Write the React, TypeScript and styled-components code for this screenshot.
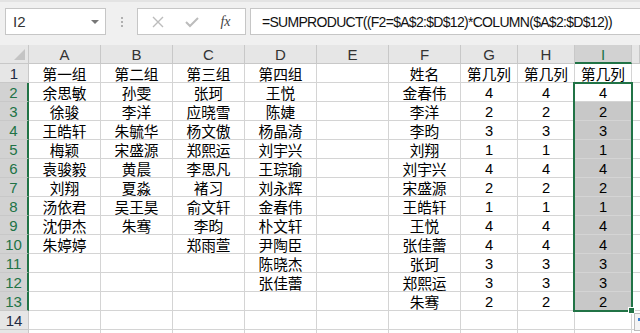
import { FC } from "react";
import styled, { createGlobalStyle } from "styled-components";

const GlobalStyle = createGlobalStyle`
  body {
    margin: 0;
    background: #ffffff;
    overflow: hidden;
    font-family: "Liberation Sans", "Noto Sans CJK SC", sans-serif;
  }
`;

const GREEN = "#217346";

const Page = styled.div`
  width: 640px;
  height: 333px;
  overflow: hidden;
`;

const Toolbar = styled.div`
  height: 45px;
  box-sizing: border-box;
  background: #f0f0f0;
  border-top: 2px solid #e3e3e3;
  padding: 6px 0 0 5px;
  display: flex;
  align-items: flex-start;
`;

const NameBox = styled.div`
  width: 101px;
  height: 27px;
  box-sizing: border-box;
  background: #fff;
  border: 1px solid #c6c6c6;
  display: flex;
  align-items: center;
  justify-content: space-between;
  padding: 0 6px 0 7px;
  font-size: 15px;
  color: #333;
`;

const DropArrow = styled.span`
  width: 0;
  height: 0;
  border-left: 4px solid transparent;
  border-right: 4px solid transparent;
  border-top: 4px solid #777;
`;

const Grip = styled.div`
  width: 31px;
  height: 27px;
  display: flex;
  flex-direction: column;
  align-items: center;
  justify-content: center;
  gap: 2px;
  span {
    width: 2px;
    height: 2px;
    background: #b0b0b0;
  }
`;

const FxBox = styled.div`
  width: 109px;
  height: 27px;
  box-sizing: border-box;
  background: #fff;
  border: 1px solid #c6c6c6;
  display: flex;
  align-items: center;
  justify-content: space-around;
  padding: 0 4px;
`;

const FxText = styled.span`
  font-family: "Liberation Serif", serif;
  font-style: italic;
  font-size: 14px;
  color: #444;
`;

const FormulaInput = styled.div`
  flex: 1;
  margin-left: 4px;
  margin-right: -2px;
  height: 27px;
  box-sizing: border-box;
  background: #fff;
  border: 1px solid #c6c6c6;
  padding-left: 11px;
  display: flex;
  align-items: center;
  font-size: 14px;
  letter-spacing: -0.7px;
  color: #111;
  white-space: nowrap;
`;

const Sheet = styled.div`
  position: relative;
  display: grid;
  grid-template-columns: 29px repeat(6, 72px) repeat(3, 57px) 1fr;
  grid-auto-rows: 19px;
`;

const Corner = styled.div`
  background: #e6e6e6;
  border-right: 1px solid #c8c8c8;
  border-bottom: 1px solid #c8c8c8;
  box-sizing: border-box;
  display: flex;
  align-items: flex-end;
  justify-content: flex-end;
  padding: 0 3px 3px 0;
  &::after {
    content: "";
    width: 0;
    height: 0;
    border-left: 11px solid transparent;
    border-bottom: 11px solid #c4c4c4;
  }
`;

const ColHead = styled.div<{ $active?: boolean }>`
  box-sizing: border-box;
  background: ${(p) => (p.$active ? "#d2d2d2" : "#e6e6e6")};
  color: ${(p) => (p.$active ? GREEN : "#333")};
  border-right: 1px solid #c8c8c8;
  border-bottom: ${(p) => (p.$active ? `2px solid ${GREEN}` : "1px solid #c8c8c8")};
  font-size: 15px;
  display: flex;
  align-items: center;
  justify-content: center;
  padding-top: 1px;
`;

const RowHead = styled.div<{ $active?: boolean }>`
  box-sizing: border-box;
  background: ${(p) => (p.$active ? "#d2d2d2" : "#e6e6e6")};
  color: ${(p) => (p.$active ? GREEN : "#1f2b44")};
  border-right: ${(p) => (p.$active ? `2px solid ${GREEN}` : "1px solid #c8c8c8")};
  border-bottom: 1px solid #c8c8c8;
  font-size: 15px;
  display: flex;
  align-items: center;
  justify-content: center;
  padding-top: 1px;
`;

const Cell = styled.div<{ $fill?: boolean }>`
  box-sizing: border-box;
  background: ${(p) => (p.$fill ? "#c8c8c8" : "#fff")};
  border-right: 1px solid #d4d4d4;
  border-bottom: 1px solid #d4d4d4;
  font-size: 14.7px;
  color: #000;
  display: flex;
  align-items: center;
  justify-content: center;
  padding-top: 1px;
  white-space: nowrap;
  overflow: hidden;
`;

const EdgeCell = styled.div`
  box-sizing: border-box;
  background: #fff;
  border-bottom: 1px solid #d4d4d4;
`;

const Selection = styled.div`
  position: absolute;
  left: 573px;
  top: 37px;
  width: 60px;
  height: 230px;
  box-sizing: border-box;
  border: 2px solid ${GREEN};
  pointer-events: none;
`;

const FillHandle = styled.div`
  position: absolute;
  left: 628px;
  top: 262px;
  width: 7px;
  height: 7px;
  box-sizing: border-box;
  background: ${GREEN};
  border: 1px solid #fff;
`;

const QuickAnalysis = styled.div`
  position: absolute;
  left: 634px;
  top: 268px;
  width: 18px;
  height: 18px;
  box-sizing: border-box;
  background: #f4f4f4;
  border: 1px solid #bdbdbd;
  &::before {
    content: "";
    position: absolute;
    left: 3px;
    top: 4px;
    width: 10px;
    height: 3px;
    background: #3c7fd4;
  }
`;

const cols = ["A", "B", "C", "D", "E", "F", "G", "H", "I"];

const groups: string[][] = [
  ["第一组", "余思敏", "徐骏", "王皓轩", "梅颖", "袁骏毅", "刘翔", "汤依君", "沈伊杰", "朱婷婷"],
  ["第二组", "孙雯", "李洋", "朱毓华", "宋盛源", "黄晨", "夏淼", "吴王昊", "朱骞"],
  ["第三组", "张珂", "应晓雪", "杨文傲", "郑熙运", "李思凡", "褚习", "俞文轩", "李昀", "郑雨萱"],
  ["第四组", "王悦", "陈婕", "杨晶渏", "刘宇兴", "王琮瑜", "刘永辉", "金春伟", "朴文轩", "尹陶臣", "陈晓杰", "张佳蕾"],
];

const names = ["姓名", "金春伟", "李洋", "李昀", "刘翔", "刘宇兴", "宋盛源", "王皓轩", "王悦", "张佳蕾", "张珂", "郑熙运", "朱骞"];
const nums = ["第几列", "4", "2", "3", "1", "4", "2", "1", "4", "4", "3", "3", "2"];

const XIcon = () => (
  <svg width="12" height="12" viewBox="0 0 12 12">
    <path d="M1 1 L11 11 M11 1 L1 11" stroke="#bcbcbc" strokeWidth="1.4" fill="none" />
  </svg>
);

const CheckIcon = () => (
  <svg width="14" height="12" viewBox="0 0 14 12">
    <path d="M1 6 L5 10 L13 2" stroke="#bcbcbc" strokeWidth="2" fill="none" />
  </svg>
);

const App: FC = () => {
  const rows = Array.from({ length: 15 }, (_, i) => i);

  return (
    <Page>
      <GlobalStyle />
      <Toolbar>
        <NameBox>
          I2
          <DropArrow />
        </NameBox>
        <Grip>
          <span />
          <span />
          <span />
        </Grip>
        <FxBox>
          <XIcon />
          <CheckIcon />
          <FxText>fx</FxText>
        </FxBox>
        <FormulaInput>=SUMPRODUCT((F2=$A$2:$D$12)*COLUMN($A$2:$D$12))</FormulaInput>
      </Toolbar>
      <Sheet>
        <Corner />
        {cols.map((c) => (
          <ColHead key={c} $active={c === "I"}>
            {c}
          </ColHead>
        ))}
        <ColHead />
        {rows.map((r) => {
          const active = r >= 1 && r <= 12;
          return [
            <RowHead key={`h${r}`} $active={active}>
              {r < 14 ? r + 1 : ""}
            </RowHead>,
            ...groups.map((g, gi) => <Cell key={`g${gi}-${r}`}>{g[r] ?? ""}</Cell>),
            <Cell key={`e${r}`} />,
            <Cell key={`f${r}`}>{names[r] ?? ""}</Cell>,
            <Cell key={`g${r}`}>{nums[r] ?? ""}</Cell>,
            <Cell key={`hh${r}`}>{nums[r] ?? ""}</Cell>,
            <Cell key={`i${r}`} $fill={r >= 2 && r <= 12}>
              {nums[r] ?? ""}
            </Cell>,
            <EdgeCell key={`j${r}`} />,
          ];
        })}
        <Selection />
        <FillHandle />
        <QuickAnalysis />
      </Sheet>
    </Page>
  );
};

export default App;
